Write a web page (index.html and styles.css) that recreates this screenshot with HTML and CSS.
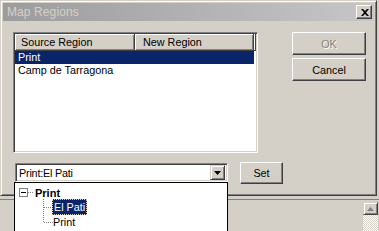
FILE: index.html
```html
<!DOCTYPE html>
<html>
<head>
<meta charset="utf-8">
<link rel="stylesheet" href="styles.css">
</head>
<body>
<div class="window">
  <div class="titlebar">
    <span class="title">Map Regions</span>
    <span class="close"><svg width="8" height="7" viewBox="0 0 8 7"><path d="M0 0h2l2 2 2-2h2L5 3.5 8 7H6L4 5 2 7H0l3-3.5z" fill="#000"/></svg></span>
  </div>
  <div class="content">
    <div class="left">
      <div class="listview">
        <div class="header">
          <div class="hcell c1">Source Region</div>
          <div class="hcell c2">New Region</div>
          <div class="hcell filler"></div>
        </div>
        <div class="rows">
          <div class="row selected">Print</div>
          <div class="row">Camp de Tarragona</div>
        </div>
      </div>
      <div class="combo-row">
        <div class="combo">
          <span class="combo-text">Print:El Pati</span>
          <span class="combo-btn"><svg width="7" height="4" viewBox="0 0 7 4"><path d="M0 0h7L3.5 4z" fill="#000"/></svg></span>
        </div>
        <button class="btn set">Set</button>
      </div>
    </div>
    <div class="right">
      <button class="btn disabled">OK</button>
      <button class="btn">Cancel</button>
    </div>
  </div>
</div>
<div class="below">
  <div class="scrollbar">
    <span class="sb-btn"><svg width="7" height="4" viewBox="0 0 7 4"><path d="M3.5 0L7 4H0z" fill="#808080"/></svg></span>
    <span class="sb-track"></span>
  </div>
</div>
<div class="dropdown">
  <div class="tree">
    <div class="trow r1">
      <svg class="twig" width="20" height="13" viewBox="0 0 20 13"><rect x="4.5" y="2.5" width="8" height="8" fill="#fff" stroke="#808080"/><path d="M6 6.5h5" stroke="#000"/><path d="M13 6.5h6" stroke="#808080" stroke-dasharray="1 1"/></svg>
      <span class="tlabel bold">Print</span>
    </div>
    <div class="trow r2">
      <svg class="twig" width="37" height="16" viewBox="0 0 37 16"><path d="M28.5 0v16M29 8.5h8" stroke="#808080" stroke-dasharray="1 1"/></svg>
      <span class="tlabel sel">El Pati</span>
    </div>
    <div class="trow r3">
      <svg class="twig" width="38" height="14" viewBox="0 0 38 14"><path d="M28.5 0v7M29 7.5h9" stroke="#808080" stroke-dasharray="1 1"/></svg>
      <span class="tlabel">Print</span>
    </div>
  </div>
</div>
</body>
</html>
```
FILE: styles.css
```css
* { box-sizing: border-box; }
body {
  margin: 0;
  background: #d4d0c8;
  font-family: "Liberation Sans", Arial, sans-serif;
  font-size: 10.8px;
  color: #000;
  width: 379px;
  height: 231px;
  overflow: hidden;
  position: relative;
}
.window {
  width: 377px;
  height: 196px;
  border: 1px solid;
  border-color: #d4d0c8 #404040 #404040 #d4d0c8;
  box-shadow: inset 1px 1px #fff, inset -1px -1px #808080;
  padding: 2px;
  display: flex;
  flex-direction: column;
}
.titlebar {
  height: 18px;
  flex: none;
  background: linear-gradient(to right, #9c9c9c, #c6c6c6);
  display: flex;
  align-items: center;
  justify-content: space-between;
  padding: 0 2px 0 4px;
}
.title {
  color: #d4d0c8;
  font-size: 12px;
  letter-spacing: 0.1px;
}
.close {
  width: 16px;
  height: 14px;
  background: #d4d0c8;
  border: 1px solid;
  border-color: #fff #404040 #404040 #fff;
  box-shadow: inset -1px -1px #808080;
  display: flex;
  align-items: center;
  justify-content: center;
  padding-left: 1px;
}
.content {
  display: flex;
  padding: 11px 0 0 10px;
}
.left {
  width: 245px;
  flex: none;
  display: flex;
  flex-direction: column;
}
.listview {
  height: 121px;
  background: #fff;
  border: 1px solid;
  border-color: #808080 #fff #fff #808080;
  box-shadow: inset 1px 1px #404040, inset -1px -1px #d4d0c8;
  padding: 1px;
  display: flex;
  flex-direction: column;
}
.header {
  display: flex;
  height: 17px;
}
.hcell {
  background: #d4d0c8;
  border-right: 1px solid #404040;
  border-bottom: 1px solid #404040;
  box-shadow: inset 1px 1px #fff, inset -1px -1px #808080;
  padding-left: 6px;
  line-height: 16px;
  white-space: nowrap;
  flex: none;
}
.c1 { width: 120px; }
.c2 { width: 119px; padding-left: 8px; }
.filler { flex: 1; padding: 0; }
.row {
  height: 13px;
  line-height: 13px;
  padding-left: 3px;
  white-space: nowrap;
}
.row.selected {
  width: 239px;
  background: #0a246a;
  color: #fff;
}
.combo-row {
  display: flex;
  align-items: flex-start;
  margin-top: 10px;
  width: 290px;
}
.combo {
  flex: none;
  margin-left: 2px;
  width: 213px;
  height: 19px;
  background: #fff;
  border: 1px solid;
  border-color: #808080 #fff #fff #808080;
  box-shadow: inset 1px 1px #404040, inset -1px -1px #d4d0c8;
  padding: 2px;
  display: flex;
  align-items: center;
  justify-content: space-between;
}
.combo-text {
  padding-left: 1px;
  letter-spacing: -0.2px;
}
.combo-btn {
  width: 15px;
  height: 15px;
  background: #d4d0c8;
  border: 1px solid;
  border-color: #d4d0c8 #404040 #404040 #d4d0c8;
  box-shadow: inset 1px 1px #fff, inset -1px -1px #808080;
  display: flex;
  align-items: center;
  justify-content: center;
}
.btn {
  font: inherit;
  color: #000;
  background: #d4d0c8;
  border: 1px solid;
  border-color: #fff #404040 #404040 #fff;
  box-shadow: inset -1px -1px #808080;
  padding: 0;
  margin: 0;
  display: flex;
  align-items: center;
  justify-content: center;
  flex: none;
}
.btn.set {
  width: 43px;
  height: 22px;
  margin-left: 12px;
  margin-top: -1px;
}
.right {
  margin-left: 34px;
  width: 74px;
  flex: none;
  display: flex;
  flex-direction: column;
  gap: 3px;
}
.right .btn {
  width: 74px;
  height: 23px;
}
.btn.disabled {
  color: #808080;
  text-shadow: 1px 1px #fff;
}
.below {
  margin-top: 3px;
  border-top: 1px solid #808080;
  height: 32px;
  display: flex;
  justify-content: flex-end;
  padding: 2px 1px 0 0;
}
.scrollbar {
  width: 15px;
  display: flex;
  flex-direction: column;
}
.sb-btn {
  height: 13px;
  background: #d4d0c8;
  border: 1px solid;
  border-color: #d4d0c8 #404040 #404040 #d4d0c8;
  box-shadow: inset 1px 1px #fff, inset -1px -1px #808080;
  display: flex;
  align-items: center;
  justify-content: center;
}
.sb-track {
  flex: 1;
  background-image: repeating-conic-gradient(#fff 0 25%, #d4d0c8 0 50%);
  background-size: 2px 2px;
}
.dropdown {
  position: absolute;
  left: 14px;
  top: 182px;
  width: 214px;
  height: 60px;
  background: #fff;
  border: 1px solid #000;
}
.tree { padding-top: 3px; }
.trow {
  display: flex;
  align-items: center;
  white-space: nowrap;
}
.r1 { height: 13px; }
.r2 { height: 16px; }
.r3 { height: 14px; }
.twig { display: block; flex: none; }
.tlabel.bold { font-weight: bold; font-size: 11px; }
.tlabel.sel {
  background: #0a246a;
  color: #fff;
  outline: 1px dotted #d4d0c8;
  outline-offset: -1px;
  padding: 1px 2px;
  line-height: 14px;
}
```
